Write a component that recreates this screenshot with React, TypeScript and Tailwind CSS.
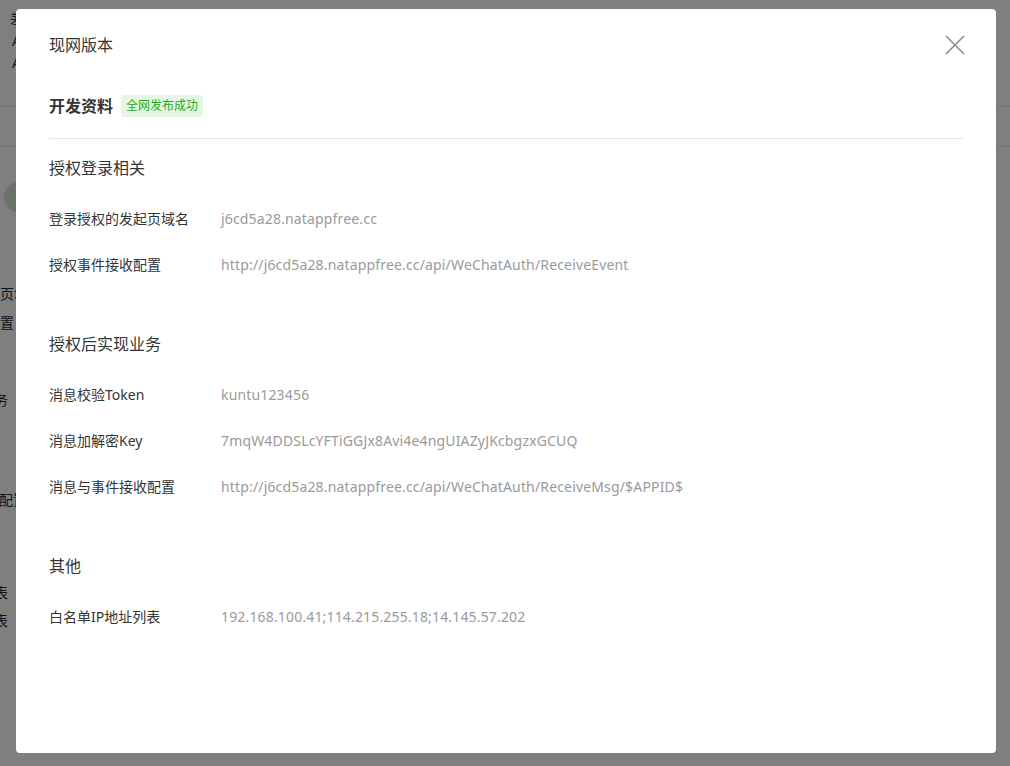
import React from "react";

interface InfoRow {
  label: string;
  value: string;
}

interface InfoSection {
  title: string;
  rows: InfoRow[];
}

const sections: InfoSection[] = [
  {
    title: "授权登录相关",
    rows: [
      { label: "登录授权的发起页域名", value: "j6cd5a28.natappfree.cc" },
      {
        label: "授权事件接收配置",
        value: "http://j6cd5a28.natappfree.cc/api/WeChatAuth/ReceiveEvent",
      },
    ],
  },
  {
    title: "授权后实现业务",
    rows: [
      { label: "消息校验Token", value: "kuntu123456" },
      { label: "消息加解密Key", value: "7mqW4DDSLcYFTiGGJx8Avi4e4ngUIAZyJKcbgzxGCUQ" },
      {
        label: "消息与事件接收配置",
        value: "http://j6cd5a28.natappfree.cc/api/WeChatAuth/ReceiveMsg/$APPID$",
      },
    ],
  },
  {
    title: "其他",
    rows: [
      {
        label: "白名单IP地址列表",
        value: "192.168.100.41;114.215.255.18;14.145.57.202",
      },
    ],
  },
];

const font = "font-['Noto_Sans','Noto_Sans_CJK_SC',sans-serif]";

// page behind the dialog, only its left edge peeks out
function BackgroundPage() {
  return (
    <div className="w-[1010px] h-[766px] bg-white overflow-hidden text-[14px] text-[#353535]">
      <div className="flex flex-col">
        <div className="h-[106px] pl-[10px] pt-[10px] flex flex-col gap-[4px] text-[#353535]">
          <span className="leading-[18px]">差</span>
          <span className="leading-[18px] pl-[2px]">A</span>
          <span className="leading-[18px] pl-[2px]">A</span>
        </div>
        <div className="h-[40px] border-t border-[#e7e7eb]" />
        <div className="border-t border-[#e7e7eb] h-[134px] pt-[34px] pl-[4px]">
          <div className="w-[32px] h-[32px] rounded-full bg-[#d5e6d0]" />
        </div>
        <div className="mt-[3px] flex flex-col items-start text-[#1f2d3d]">
          <span className="leading-[22px] whitespace-nowrap">页域</span>
          <span className="leading-[22px] mt-[7px]">置</span>
          <span className="leading-[22px] mt-[55px] ml-[-6px]">务</span>
          <span className="leading-[22px] mt-[78px] ml-[-1px] whitespace-nowrap">配置</span>
          <span className="leading-[22px] mt-[71px] ml-[-6px]">表</span>
          <span className="leading-[22px] mt-[6px] ml-[-6px]">表</span>
        </div>
      </div>
    </div>
  );
}

function CloseIcon() {
  return (
    <svg width="20" height="20" viewBox="0 0 20 20" fill="none">
      <path d="M1 1L19 19M19 1L1 19" stroke="#8c8c8c" strokeWidth="1.6" />
    </svg>
  );
}

export default function App() {
  return (
    <div className={`relative w-[1010px] h-[766px] overflow-hidden ${font}`}>
      <BackgroundPage />
      <div className="absolute inset-0 bg-black/50" />
      <div className="absolute left-[16px] top-[9px] w-[980px] h-[744px] bg-white rounded-[4px] px-[33px] pt-[24px]">
        <div className="flex items-center justify-between h-[24px]">
          <span className="text-[16px] text-[#353535]">现网版本</span>
          <button className="mr-[-2px]">
            <CloseIcon />
          </button>
        </div>

        <div className="mt-[37px] flex items-center h-[23px]">
          <span className="text-[16px] font-bold text-[#353535]">开发资料</span>
          <span className="ml-[8px] h-[22px] px-[5px] flex items-center rounded-[3px] bg-[#e6f6e6] text-[12px] text-[#1aad19]">
            全网发布成功
          </span>
        </div>
        <div className="mt-[21px] border-t border-[#e7e7eb]" />

        <div className="pt-[17px]">
          {sections.map((section, i) => (
            <div key={section.title} className={i > 0 ? "mt-[45px]" : ""}>
              <div className="h-[24px] flex items-center text-[16px] text-[#353535]">
                {section.title}
              </div>
              <div className="mt-[15px]">
                {section.rows.map((row) => (
                  <div key={row.label} className="h-[46px] flex items-center text-[14px]">
                    <span className="w-[172px] shrink-0 text-[#353535]">{row.label}</span>
                    <span className="text-[#9a9a9a] tracking-[0.16px]">{row.value}</span>
                  </div>
                ))}
              </div>
            </div>
          ))}
        </div>
      </div>
    </div>
  );
}
